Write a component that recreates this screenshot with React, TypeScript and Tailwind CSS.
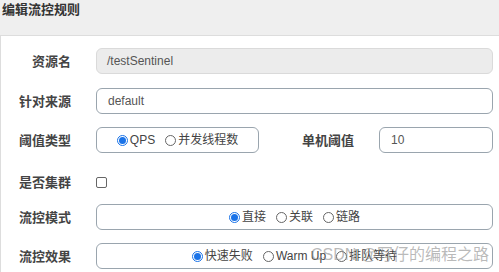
import React from "react"

const font = { fontFamily: '"Liberation Sans", "Noto Sans CJK SC", sans-serif' }

function Label({ children }: { children: React.ReactNode }) {
  return (
    <div className="w-[70px] shrink-0 text-right text-[13px] font-bold text-[#444] leading-none">
      {children}
    </div>
  )
}

function Radio({ checked, label }: { checked?: boolean; label: string }) {
  return (
    <span className="flex items-center gap-[2px]">
      {checked ? (
        <span className="w-[11px] h-[11px] rounded-full border border-[#1a73e8] bg-white flex items-center justify-center">
          <span className="w-[7px] h-[7px] rounded-full bg-[#1a73e8]" />
        </span>
      ) : (
        <span className="w-[11px] h-[11px] rounded-full border border-[#666] bg-white" />
      )}
      <span className="text-[12px] text-[#444] leading-none">{label}</span>
    </span>
  )
}

function Box({ children, className = "" }: { children: React.ReactNode; className?: string }) {
  return (
    <div
      className={`h-[26px] rounded-[6px] border border-[#9aa5ae] bg-white flex items-center ${className}`}
    >
      {children}
    </div>
  )
}

export default function App() {
  return (
    <div className="relative w-[499px] h-[272px] overflow-hidden bg-[#efefef]" style={font}>
      <div className="h-[35px] px-[2px] text-[13px] font-bold text-[#333] leading-[20px]">
        编辑流控规则
      </div>

      <div className="bg-white border-t border-l border-[#dddddd] h-[240px] pt-[12px] pr-[6px]">
        <div className="flex items-center gap-[25px]">
          <Label>资源名</Label>
          <div className="flex-1 h-[26px] rounded-[6px] border border-[#dadada] bg-[#ececec] flex items-center px-[10px] text-[12px] text-[#555]">
            /testSentinel
          </div>
        </div>

        <div className="flex items-center gap-[25px] mt-[14px]">
          <Label>针对来源</Label>
          <Box className="flex-1 px-[11px] text-[12px] text-[#555]">default</Box>
        </div>

        <div className="flex items-center gap-[25px] mt-[13px]">
          <Label>阈值类型</Label>
          <Box className="w-[163px] shrink-0 justify-center gap-[10px]">
            <Radio checked label="QPS" />
            <Radio label="并发线程数" />
          </Box>
          <Label>单机阈值</Label>
          <Box className="flex-1 px-[11px] text-[12px] text-[#555]">10</Box>
        </div>

        <div className="flex items-center gap-[25px] mt-[16px] h-[26px]">
          <Label>是否集群</Label>
          <span className="w-[11px] h-[11px] rounded-[2px] border border-[#666] bg-white" />
        </div>

        <div className="flex items-center gap-[25px] mt-[9px]">
          <Label>流控模式</Label>
          <Box className="flex-1 justify-center gap-[10px]">
            <Radio checked label="直接" />
            <Radio label="关联" />
            <Radio label="链路" />
          </Box>
        </div>

        <div className="flex items-center gap-[25px] mt-[13px]">
          <Label>流控效果</Label>
          <Box className="flex-1 justify-center gap-[10px]">
            <Radio checked label="快速失败" />
            <Radio label="Warm Up" />
            <Radio label="排队等待" />
          </Box>
        </div>
      </div>

      <div className="absolute left-[311px] top-[245px] text-[16px] leading-[20px] text-[#8c8c8c]/60 whitespace-nowrap">
        CSDN @写仔的编程之路
      </div>
    </div>
  )
}
